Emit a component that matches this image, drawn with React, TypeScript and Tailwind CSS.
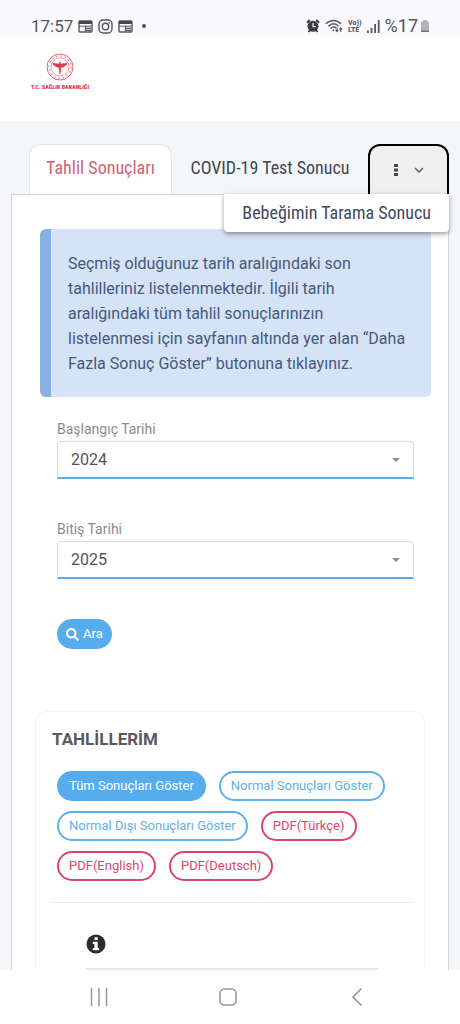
import { useState } from "react";
import clsx from "clsx";
import { FaSearch } from "react-icons/fa";

const filters = [
  { label: "Tüm Sonuçları Göster", kind: "active" },
  { label: "Normal Sonuçları Göster", kind: "info" },
  { label: "Normal Dışı Sonuçları Göster", kind: "info" },
  { label: "PDF(Türkçe)", kind: "pdf" },
  { label: "PDF(English)", kind: "pdf" },
  { label: "PDF(Deutsch)", kind: "pdf" },
];

const years = ["2022", "2023", "2024", "2025"];

const CardIcon = () => (
  <svg viewBox="0 0 15 13" className="w-[15px] h-[13px]" fill="none">
    <rect x="1" y="1" width="13" height="11" rx="1" stroke="#55555a" strokeWidth="1.4" />
    <path d="M1 1h13v3H1z" fill="#47474b" />
    <path d="M7.500 6.200H13M8 8.400h5M8 10.400h5M7.500 5.500v6" stroke="#55555a" strokeWidth="1.1" />
    <path d="M1 6.200h6.500" stroke="#55555a" strokeWidth="0.900" />
  </svg>
);

const InstagramIcon = () => (
  <svg viewBox="0 0 15 15" className="size-[15px]" fill="none" stroke="#55555a" strokeWidth="1.4">
    <rect x="1" y="1" width="13" height="13" rx="4" />
    <circle cx="7.5" cy="7.5" r="3.200" />
    <circle cx="11.200" cy="3.800" r="0.500" fill="#55555a" strokeWidth="0.500" />
  </svg>
);

const StatusBar = () => (
  <div className="flex items-end justify-between h-9 pl-[31px] pr-[30px] bg-[#f9f9fe] text-[#55555a]">
    <div className="flex items-center gap-[5px] h-5">
      <span className="text-[17px] leading-5">17:57</span>
      <CardIcon />
      <InstagramIcon />
      <CardIcon />
      <span className="size-1 ml-1 rounded-full bg-[#55555a]" />
    </div>
    <div className="flex items-center gap-[5px] h-5">
      {/* Alarm */}
      <svg viewBox="0 0 14 14" className="size-[14px]">
        <path d="M1 3.800L3.800 1M13 3.800L10.200 1M2.500 13l2-2.500M11.500 13l-2-2.500" stroke="#3c3c40" strokeWidth="2" />
        <circle cx="7" cy="7.300" r="5.500" fill="#3c3c40" />
        <path d="M7 4v3.600h2.800" stroke="#f9f9fe" strokeWidth="1.200" fill="none" />
      </svg>
      {/* Wifi */}
      <svg viewBox="0 0 18 14" className="w-[18px] h-[14px]" fill="none" stroke="#55555a" strokeWidth="1.400">
        <path d="M1 4.800c4.500-4.400 10.500-4.400 15 0M3.300 7.200c3.200-3 7.200-3 10.400 0M5.800 9.500c1.500-1.400 4-1.600 5.500-.4" />
        <circle cx="8.300" cy="11.200" r="0.600" fill="#55555a" strokeWidth="0.600" />
        <path d="M12 8.500v4M10.600 11l1.400 1.700 1.400-1.700M15.800 13V9M14.400 10.500l1.400-1.700 1.400 1.700" strokeWidth="1.100" />
      </svg>
      <span className="flex flex-col font-['Roboto_Condensed',Roboto,sans-serif] text-[8px] leading-[7px] font-bold">
        <span>Vo))</span>
        <span>LTE</span>
      </span>
      {/* Signal */}
      <svg viewBox="0 0 13 13" className="size-[13px]" fill="#55555a">
        <path d="M0 10.500h1.800V13H0zM3.600 8h1.800v5H3.600zM7.200 4h1.800v9H7.200zM10.800 0h1.800v13h-1.800z" />
      </svg>
      <div className="flex items-center gap-[2px]">
        <span className="text-[18px] leading-5">%17</span>
        <svg viewBox="0 0 10 14" className="w-[10px] h-[14px]">
          <path d="M3 1h4v1.500h2V13H1V2.500h2z" fill="#b4b4b7" />
          <path d="M1 11.500h8V13H1z" fill="#77777b" />
        </svg>
      </div>
    </div>
  </div>
);

const Logo = () => (
  <a href="#" className="flex flex-col items-center gap-[2px] w-[60px] text-[#dc3a50]">
    <svg viewBox="0 0 28 28" className="size-7" fill="none" stroke="currentColor">
      <circle cx="14" cy="14" r="13" strokeWidth="0.800" />
      <circle cx="14" cy="14" r="11" strokeWidth="1.500" strokeDasharray="1.500 2.820" opacity="0.600" />
      <circle cx="14" cy="14" r="9" strokeWidth="0.500" />
      <path
        d="M14 21l-1-7c-1.800.7-3.500-.2-4-1.400-1.300-.2-2-1.100-2.200-2.600 2.400.8 4.600.2 6.200 1.200L14 8.500l1 2.700c1.600-1 3.800-.4 6.200-1.200-.2 1.500-.9 2.400-2.200 2.600-.5 1.200-2.200 2.100-4 1.400z"
        fill="currentColor"
        strokeWidth="0.500"
      />
      <path d="M12.200 15.500c2 .5 3 1.200 3 2s-1.700 1-2.400 1.800" strokeWidth="0.700" />
    </svg>
    <span className="font-['Roboto_Condensed',Roboto,sans-serif] text-[6px] leading-[8px] font-black whitespace-nowrap">
      T.C. SAĞLIK BAKANLIĞI
    </span>
  </a>
);

const Tabs = () => {
  const [open, setOpen] = useState(true);

  return (
    <div className="flex h-[50px] pl-[18px] font-['Roboto_Condensed',Roboto,sans-serif] text-[18px]">
      <button className="w-[143px] pb-1 rounded-t-xl border border-b-0 border-[#e3e5e8] bg-white text-[#cf6376]">
        Tahlil Sonuçları
      </button>
      <button className="flex-1 pb-1 text-[#3f4754] whitespace-nowrap">COVID-19 Test Sonucu</button>
      <div className="relative w-[81px]">
        <button
          aria-label="Diğer"
          aria-expanded={open}
          onClick={() => setOpen(!open)}
          className="flex items-center justify-center gap-4 size-full rounded-t-xl border-2 border-b-0 border-black bg-[#efefef]"
        >
          <svg viewBox="0 0 4 14" className="w-1 h-[14px]" fill="#3f4754">
            <path d="M0 1h4v3H0zM0 5.500h4v3H0zM0 10h4v3H0z" />
          </svg>
          <svg viewBox="0 0 10 6" className="w-[10px] h-[6px]" fill="none" stroke="#55595f" strokeWidth="1.400">
            <path d="M1 1l4 4 4-4" />
          </svg>
        </button>
        {open && (
          <a
            href="#"
            className="absolute z-10 top-full right-0 px-[18px] py-1.5 leading-[26px] whitespace-nowrap rounded-b-sm bg-white text-[#3f4a5e] shadow-[0_2px_5px_rgba(0,0,0,0.4)]"
          >
            Bebeğimin Tarama Sonucu
          </a>
        )}
      </div>
    </div>
  );
};

const YearSelect = ({ id, label, value }: { id: string; label: string; value: string }) => (
  <div className="flex flex-col mb-10">
    <label htmlFor={id} className="text-[14px] leading-5 mb-[2px] text-[#8b8b8b]">{label}</label>
    <div className="relative">
      <select
        id={id}
        defaultValue={value}
        className="w-full h-[38px] px-[13px] appearance-none rounded-t-[4px] border border-b-2 border-[#dcdcdc] border-b-[#5aaee8] bg-white text-[16px] text-[#555555]"
      >
        {years.map((year) => (
          <option key={year}>{year}</option>
        ))}
      </select>
      <svg viewBox="0 0 8 4" className="absolute right-[14px] top-[17px] w-2 h-1 pointer-events-none" fill="#8c8c8c">
        <path d="M0 0h8L4 4z" />
      </svg>
    </div>
  </div>
);

const Results = () => (
  <section className="flex flex-col flex-1 mx-[23px] mt-[62px] pl-4 pr-3 pt-[15px] rounded-t-xl border border-b-0 border-[#f4f4f4]">
    <h2 className="text-[17px] leading-6 font-bold text-[#58595c]">TAHLİLLERİM</h2>
    <div className="flex flex-wrap gap-x-[13px] gap-y-[10px] mt-5 pl-[5px] pb-[21px] border-b border-[#ececec]">
      {filters.map((item) => (
        <button
          key={item.label}
          className={clsx(
            "h-[30px] px-[10px] rounded-full border-2 text-[13px] whitespace-nowrap",
            item.kind === "active" && "bg-[#56adee] border-[#56adee] text-white",
            item.kind === "info" && "border-[#5fb0e8] text-[#64b0e2]",
            item.kind === "pdf" && "border-[#dc4470] text-[#d9486f]"
          )}
        >
          {item.label}
        </button>
      ))}
    </div>
    <div className="flex-1 mx-[34px] pt-[31px] border-b-2 border-[#e6e6e6]">
      <svg viewBox="0 0 20 20" className="size-5">
        <circle cx="10" cy="10" r="9.500" fill="#2b2b2b" />
        <path d="M8.500 3.200h3.200v2.800H8.500zM6.800 7.700h4.900v6.300h1.500v2.200H6.800V14h1.600V9.900H6.800z" fill="#fff" />
      </svg>
    </div>
  </section>
);

const BottomNav = () => (
  <nav className="grid grid-cols-3 items-center justify-items-center h-[54px] pl-[34px] pr-[39px] bg-white">
    <button aria-label="Son uygulamalar">
      <svg viewBox="0 0 18 18" className="size-[18px]" stroke="#98989b" strokeWidth="1.500">
        <path d="M1.500 0v18M9 0v18M16.500 0v18" />
      </svg>
    </button>
    <button aria-label="Ana ekran">
      <svg viewBox="0 0 18 18" className="size-[18px]" fill="none" stroke="#98989b" strokeWidth="1.600">
        <rect x="1" y="1" width="16" height="16" rx="4.500" />
      </svg>
    </button>
    <button aria-label="Geri">
      <svg viewBox="0 0 12 18" className="w-3 h-[18px]" fill="none" stroke="#98989b" strokeWidth="1.600">
        <path d="M10.500 0.500L2 9l8.500 8.500" />
      </svg>
    </button>
  </nav>
);

const App = () => {
  return (
    <div className="flex flex-col min-h-screen bg-[#f5f6fa] font-[Roboto,sans-serif]">
      <StatusBar />

      {/* Header */}
      <header className="h-[85px] pl-[30px] pt-[17px] bg-white">
        <Logo />
      </header>

      <main className="flex flex-col flex-1 pt-[23px] px-[11px]">
        <Tabs />

        {/* Panel */}
        <div className="flex flex-col flex-1 border border-b-0 border-[#d3d5d9] bg-white">
          <p className="mt-[34px] ml-7 mr-[17px] pt-[22px] pb-[21px] pl-[17px] pr-[21px] rounded-md border-l-[11px] border-[#87b0e6] bg-[#d6e3f6] text-[16px] leading-[25px] text-[#44597c]">
            Seçmiş olduğunuz tarih aralığındaki son tahlilleriniz listelenmektedir. İlgili tarih
            aralığındaki tüm tahlil sonuçlarınızın listelenmesi için sayfanın altında yer alan “Daha
            Fazla Sonuç Göster” butonuna tıklayınız.
          </p>

          <form className="flex flex-col mt-[22px] ml-[45px] mr-[34px]" onSubmit={(e) => e.preventDefault()}>
            <YearSelect id="start" label="Başlangıç Tarihi" value="2024" />
            <YearSelect id="end" label="Bitiş Tarihi" value="2025" />
            <button className="flex items-center self-start gap-1 h-[30px] px-[9px] rounded-full bg-[#56adee] text-[13px] text-white">
              <FaSearch className="size-[13px]" />
              Ara
            </button>
          </form>

          <Results />
        </div>
      </main>

      <BottomNav />
    </div>
  );
};

export default App;
